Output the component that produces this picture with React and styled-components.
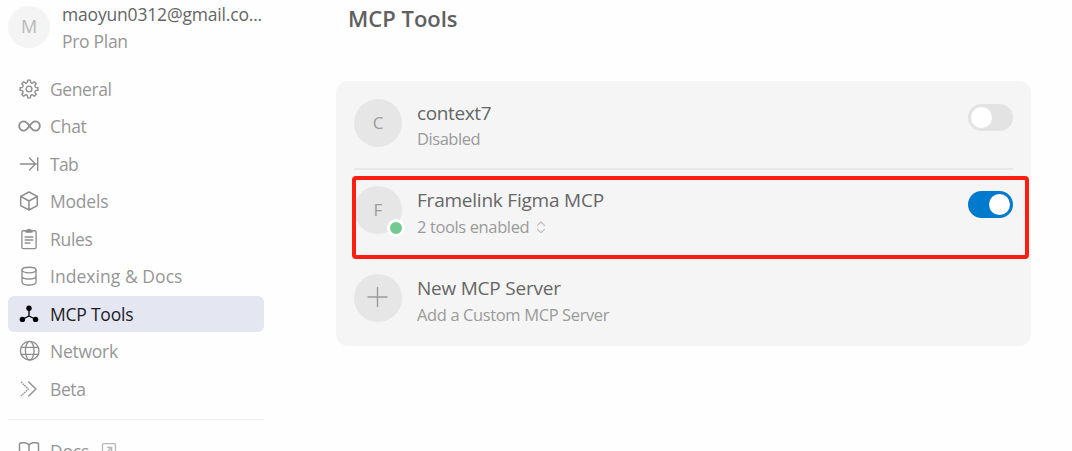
import React from 'react';
import styled, { createGlobalStyle } from 'styled-components';

const GlobalStyle = createGlobalStyle`
  * { box-sizing: border-box; }
  body {
    margin: 0;
    background: #fff;
    font-family: "Open Sans", "Noto Sans", sans-serif;
    overflow: hidden;
  }
`;

const Page = styled.div`
  display: flex;
  height: 451px;
  overflow: hidden;
  background: #fefefe;
`;

const Sidebar = styled.aside`
  width: 264px;
  flex: none;
  padding: 6px 0 0 8px;
`;

const Account = styled.div`
  display: flex;
  gap: 12px;
  height: 64.6px;
`;

const Avatar = styled.div`
  position: relative;
  display: flex;
  align-items: center;
  justify-content: center;
  flex: none;
  width: ${(p) => p.$size}px;
  height: ${(p) => p.$size}px;
  padding-bottom: 2px;
  border-radius: 50%;
  background: ${(p) => p.$bg};
  color: ${(p) => p.$color};
  font-size: ${(p) => p.$font || 17}px;
`;

const AccountText = styled.div`
  display: flex;
  flex-direction: column;
  margin-top: -5px;
`;

const Text = styled.span`
  white-space: nowrap;
  font-size: ${(p) => p.$size}px;
  line-height: ${(p) => p.$line}px;
  letter-spacing: ${(p) => p.$spacing || 0}px;
  color: ${(p) => p.$color};
`;

const Nav = styled.nav`
  display: flex;
  flex-direction: column;
  gap: 1.5px;
`;

const NavItem = styled.a`
  display: flex;
  align-items: center;
  height: 36px;
  padding-left: 10px;
  gap: 10px;
  border-radius: 6px;
  color: ${(p) => (p.$active ? '#1c1c1e' : '#969696')};
  background: ${(p) => (p.$active ? '#e4e6f1' : 'transparent')};

  svg { flex: none; display: block; }
`;

const IconBox = styled.span`
  display: flex;
  align-items: center;
  justify-content: center;
  width: 22px;
  height: 24px;
  color: ${(p) => (p.$active ? '#000' : '#8e8e8e')};
`;

const Separator = styled.hr`
  height: 1px;
  margin: 12px 0 13px;
  border: 0;
  background: #efefef;
`;

const External = styled.span`
  display: flex;
  margin-left: ${(p) => p.$offset || 0}px;
  color: #b8b8b8;
`;

const Main = styled.main`
  width: 695px;
  margin-left: 72px;
`;

const Title = styled.h1`
  margin: 0;
  padding: 3px 0 0 12px;
  height: 81px;
  font-size: 22px;
  line-height: 30px;
  font-weight: 600;
  letter-spacing: 0;
  color: #606060;
`;

const Card = styled.section`
  position: relative;
  height: 265px;
  padding: 18px;
  border-radius: 12px;
  background: #f5f5f5;
`;

const Server = styled.div`
  display: flex;
  height: ${(p) => p.$height}px;
`;

const ServerText = styled.div`
  display: flex;
  flex-direction: column;
  flex: 1;
  margin-left: 15px;
`;

const Status = styled.div`
  display: flex;
  align-items: center;
  gap: 8px;
  height: 26px;
  margin-top: ${(p) => (p.$tight ? -1 : 0)}px;
`;

const Rule = styled.div`
  height: 2px;
  margin-bottom: 16px;
  background: #e8e8e8;
`;

const OnlineDot = styled.span`
  position: absolute;
  right: -3px;
  bottom: -3px;
  width: 18px;
  height: 18px;
  border: 3px solid #fff;
  border-radius: 50%;
  background: #73c991;
`;

const Toggle = styled.button`
  display: flex;
  justify-content: ${(p) => (p.$on ? 'flex-end' : 'flex-start')};
  width: 45px;
  height: 27px;
  margin-top: 5px;
  padding: 3px;
  border: 0;
  border-radius: 14px;
  background: ${(p) => (p.$on ? '#007acc' : '#e3e3e3')};

  &::after {
    content: '';
    width: 21px;
    height: 21px;
    border-radius: 50%;
    background: #fff;
  }
`;

const Highlight = styled.div`
  position: absolute;
  left: 16px;
  top: 95px;
  width: 677px;
  height: 83px;
  border: 4px solid #ff1c11;
  border-radius: 4px;
`;

const Svg = ({ w = 20, h = 20, sw = 1.35, children }) => (
  <svg width={w} height={h} viewBox={`0 0 ${w} ${h}`} fill="none" stroke="currentColor"
    strokeWidth={sw} strokeLinecap="round" strokeLinejoin="round">
    {children}
  </svg>
);

// Eight teeth, each one drawn from its leading edge to its trailing edge.
const gearPath = Array.from({ length: 8 }, (_, i) => {
  const at = (deg, r) => {
    const a = ((i * 45 + deg - 90) * Math.PI) / 180;
    return `${(10 + r * Math.cos(a)).toFixed(2)} ${(10 + r * Math.sin(a)).toFixed(2)}`;
  };
  return `${i ? 'L' : 'M'}${at(-13, 7)}L${at(-9, 9)}L${at(9, 9)}L${at(13, 7)}Q${at(22.5, 5.9)} ${at(32, 7)}`;
}).join('') + 'Z';

const Gear = () => (
  <Svg sw={1.4}><path d={gearPath} /><circle cx="10" cy="10" r="2.900" /></Svg>
);
const Infinity_ = () => (
  <Svg w={24} h={14} sw={1.9}>
    <path d="M12.500 7C10.500 4.200 9 2.400 6.800 2.400a4.600 4.600 0 0 0 0 9.200C9 11.600 10.500 9.800 12.500 7s3.500-4.600 5.700-4.600a4.600 4.600 0 0 1 0 9.200C16 11.600 14.500 9.800 12.500 7Z" />
  </Svg>
);
const TabArrow = () => (
  <Svg sw={1.4}><path d="M1.300 10h16M10.500 4l6 6-6 6M18.700 3.800v12.600" /></Svg>
);
const Cube = () => (
  <Svg sw={1.5}><path d="M10 1l8.300 4.400v9.200L10 19l-8.300-4.400V5.400zM1.700 5.400L10 10l8.300-4.600M10 10v9" /></Svg>
);
const Clipboard = () => (
  <Svg w={20} h={22}>
    <path d="M6.500 2.700H4.200c-.8 0-1.300.5-1.300 1.300v15.300c0 .8.5 1.300 1.300 1.300h11.600c.8 0 1.300-.5 1.300-1.300V4c0-.8-.5-1.300-1.300-1.300h-2.300M6.200 9h7.600M6.200 12h7.600M6.200 15h4.600" />
    <path d="M7 4V2.300h1.600a1.500 1.500 0 0 1 2.800 0H13V4z" fill="currentColor" />
  </Svg>
);
const Database = () => (
  <Svg>
    <ellipse cx="10" cy="4" rx="7" ry="2.800" />
    <path d="M3 4v12c0 1.700 3 3 7 3s7-1.300 7-3V4M3 10c0 1.700 3 3 7 3s7-1.300 7-3" />
  </Svg>
);
const Nodes = () => (
  <Svg>
    <path d="M10 4v8M10 12l-7 3.500M10 12l7 3.500" />
    <g fill="currentColor" stroke="none">
      <circle cx="10" cy="4.200" r="2.700" /><circle cx="3.400" cy="15.400" r="2.700" /><circle cx="16.600" cy="15.400" r="2.700" />
    </g>
  </Svg>
);
const Globe = () => (
  <Svg w={22} h={22}>
    <circle cx="11.700" cy="10.700" r="9.300" /><ellipse cx="11.700" cy="10.700" rx="4.300" ry="9.300" />
    <path d="M3.400 7.300h16.600M3.400 14.300h16.600" />
  </Svg>
);
const Chevrons = () => (
  <Svg>
    <path d="M2 3l7.300 7L2 17" strokeDasharray="1.600 .8" strokeLinecap="butt" />
    <path d="M9.700 3l7.300 7-7.300 7" />
  </Svg>
);
const Book = () => (
  <Svg w={22} h={20} sw={1.5}>
    <path d="M11 4C9.500 1.500 5 1.300 2.500 2c-.6.2-1 .6-1 1.200V18c3-1 7.500-1 9.500 1 2-2 6.500-2 9.500-1V3.200c0-.6-.4-1-1-1.200C17 1.300 12.500 1.500 11 4zM11 4v15" />
  </Svg>
);
const OpenLink = () => (
  <Svg w={16} h={18} sw={1.3}>
    <rect x="1.500" y="1.700" width="13" height="13" rx="1" /><path d="M5.500 10.700l5-5M6.500 5.500h4.200v4.200" />
  </Svg>
);
const Plus = () => (
  <Svg w={22} h={22} sw={1.4}><path d="M1 11h19M10.500 1.500v19" /></Svg>
);
const UpDown = () => (
  <Svg w={10} h={13} sw={1.1}><path d="M1.500 4.300L5 1l3.500 3.300M1.500 8.300L5 11.600l3.500-3.300" /></Svg>
);

const items = [
  { label: 'General', icon: <Gear />, spacing: -0.4 },
  { label: 'Chat', icon: <Infinity_ />, spacing: -0.3 },
  { label: 'Tab', icon: <TabArrow />, spacing: -0.7 },
  { label: 'Models', icon: <Cube />, spacing: -0.2 },
  { label: 'Rules', icon: <Clipboard />, spacing: -0.3 },
  { label: 'Indexing & Docs', icon: <Database />, spacing: 0.05 },
  { label: 'MCP Tools', icon: <Nodes />, spacing: -0.22, active: true },
  { label: 'Network', icon: <Globe />, spacing: -0.25 },
  { label: 'Beta', icon: <Chevrons />, spacing: -0.4 },
];

const servers = [
  { name: 'context7', status: 'Disabled', mark: 'C', height: 69, spacing: -0.38, sub: -0.45, tight: true },
  { name: 'Framelink Figma MCP', status: '2 tools enabled', mark: 'F', height: 88, on: true, spacing: -0.22, sub: -0.38 },
  { name: 'New MCP Server', status: 'Add a Custom MCP Server', mark: <Plus />, height: 48, add: true, spacing: -0.22, sub: -0.38 },
];

export default function App() {
  return (
    <Page>
      <GlobalStyle />
      <Sidebar>
        <Account>
          <Avatar $size={42} $bg="#f4f4f4" $color="#b9b9b9" $font={18}>M</Avatar>
          <AccountText>
            <Text $size={17.500} $line={27} $spacing={-0.18} $color="#656565">maoyun0312@gmail.co...</Text>
            <Text $size={17.500} $line={27} $spacing={-0.3} $color="#969696">Pro Plan</Text>
          </AccountText>
        </Account>
        <Nav>
          {items.map((it) => (
            <NavItem key={it.label} $active={it.active}>
              <IconBox $active={it.active}>{it.icon}</IconBox>
              <Text $size={17.500} $line={24} $spacing={it.spacing}>{it.label}</Text>
            </NavItem>
          ))}
        </Nav>
        <Separator />
        <NavItem>
          <IconBox><Book /></IconBox>
          <Text $size={17.500} $line={24} $spacing={-0.2}>Docs</Text>
          <External $offset={2}><OpenLink /></External>
        </NavItem>
      </Sidebar>
      <Main>
        <Title>MCP Tools</Title>
        <Card>
          {servers.map((s, i) => (
            <React.Fragment key={s.name}>
              {i === 1 && <Rule />}
              <Server $height={s.height}>
                <Avatar $size={48} $bg="#e6e6e6" $color="#9b9b9b">
                  {s.mark}
                  {s.on && <OnlineDot />}
                </Avatar>
                <ServerText>
                  <Text $size={19} $line={28} $spacing={s.spacing} $color="#666">{s.name}</Text>
                  <Status $tight={s.tight}>
                    <Text $size={16.500} $line={26} $spacing={s.sub} $color="#9a9a9a">{s.status}</Text>
                    {s.on && <External $offset={-1}><UpDown /></External>}
                  </Status>
                </ServerText>
                {!s.add && <Toggle $on={s.on} aria-label={s.name} />}
              </Server>
            </React.Fragment>
          ))}
          <Highlight />
        </Card>
      </Main>
    </Page>
  );
}
